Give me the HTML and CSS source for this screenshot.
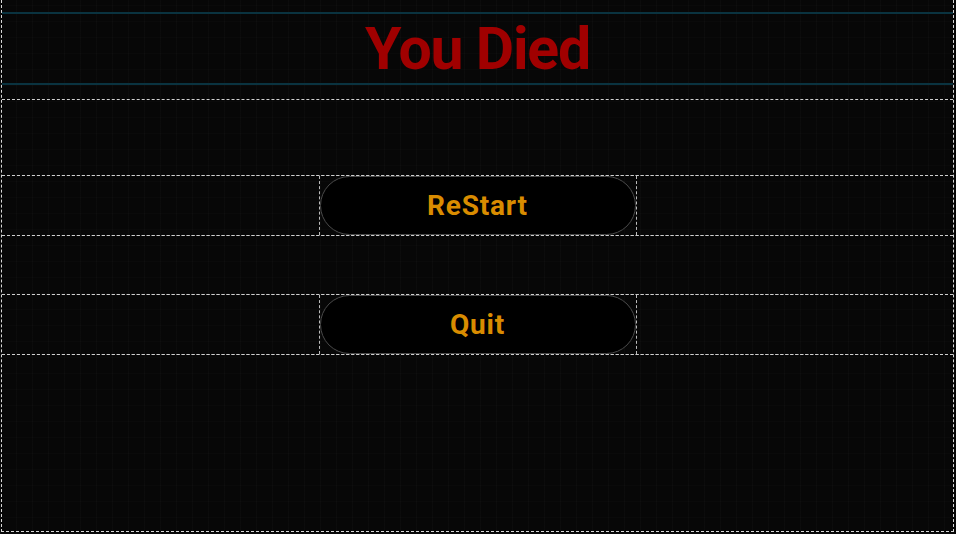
FILE: index.html
```html
<!DOCTYPE html>
<html>
<head>
<meta charset="utf-8">
<link rel="stylesheet" href="styles.css">
</head>
<body>
<div class="screen">
  <div class="header">
    <div class="title-band"><h1 class="title">You Died</h1></div>
  </div>
  <div class="row spacer-a"></div>
  <div class="row btn-row">
    <div class="side"></div>
    <div class="btn-cell"><button class="btn">ReStart</button></div>
    <div class="side"></div>
  </div>
  <div class="row spacer-c"></div>
  <div class="row btn-row">
    <div class="side"></div>
    <div class="btn-cell"><button class="btn">Quit</button></div>
    <div class="side"></div>
  </div>
  <div class="row spacer-e"></div>
</div>
</body>
</html>
```
FILE: styles.css
```css
html, body {
  margin: 0;
  padding: 0;
  background: #070707;
  height: 100%;
}
body {
  font-family: Roboto, "Liberation Sans", sans-serif;
  background-color: #070707;
  background-image:
    repeating-linear-gradient(90deg, rgba(255,255,255,0.018) 0 1px, transparent 1px 16px),
    repeating-linear-gradient(0deg, rgba(255,255,255,0.012) 0 1px, transparent 1px 16px);
}
.screen {
  box-sizing: border-box;
  margin-left: 1px;
  width: 953px;
  height: 532px;
  border-left: 1px dashed #d8d8d8;
  border-right: 1px dashed #d8d8d8;
  border-bottom: 1px dashed #d8d8d8;
  display: flex;
  flex-direction: column;
}
.header {
  height: 99px;
  box-sizing: border-box;
  padding-top: 12px;
}
.title-band {
  height: 69px;
  border-top: 2px solid #0a3340;
  border-bottom: 2px solid #0a3340;
  display: flex;
  align-items: center;
  justify-content: center;
}
.title {
  margin: 0;
  font-size: 59px;
  line-height: 60px;
  font-weight: 700;
  letter-spacing: -1.2px;
  color: #a00000;
}
.row {
  box-sizing: border-box;
  border-top: 1px dashed #cfcfcf;
  border-bottom: 1px dashed #cfcfcf;
  margin-top: -1px;
}
.spacer-a { height: 77px; margin-top: 0; }
.spacer-c { height: 60px; }
.spacer-e { flex: 1; border-bottom: none; }
.btn-row {
  height: 61px;
  display: flex;
}
.side { flex: 1; }
.btn-cell {
  width: 318px;
  box-sizing: border-box;
  border-left: 1px dashed #bbbbbb;
  border-right: 1px dashed #bbbbbb;
  display: flex;
}
.btn {
  flex: 1;
  margin: 0;
  background: #000;
  border: 1px solid #4a4a4a;
  border-radius: 30px;
  color: #d98c00;
  font-family: Roboto, "Liberation Sans", sans-serif;
  font-weight: 700;
  font-size: 28px;
  letter-spacing: 0.8px;
  padding: 0;
}
```
